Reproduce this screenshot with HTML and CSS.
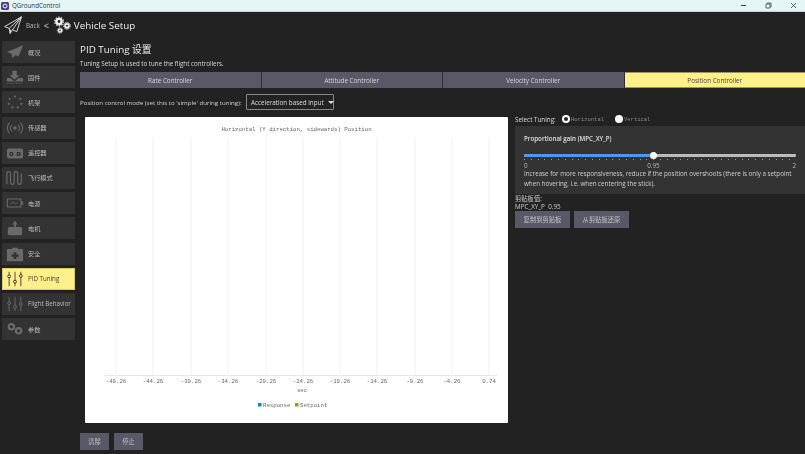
FILE: index.html
```html
<!DOCTYPE html>
<html lang="zh">
<head>
<meta charset="utf-8">
<title>QGroundControl</title>
<link rel="stylesheet" href="styles.css">
</head>
<body>
<div class="app">
  <div class="titlebar">
    <svg class="app-icon" viewBox="0 0 8 8"><rect width="8" height="8" rx="1.5" fill="#4a3a8c"/><circle cx="4" cy="4" r="2" fill="none" stroke="#fff" stroke-width="1"/></svg>
    <span class="app-name">QGroundControl</span>
    <div class="win-controls">
      <svg viewBox="0 0 7 7"><path d="M1 3.5h5" stroke="#444" fill="none"/></svg>
      <svg viewBox="0 0 7 7"><path d="M1 2h4v4H1zM2.2 2V1H6v3.8H5" stroke="#444" stroke-width=".8" fill="none"/></svg>
      <svg viewBox="0 0 7 7"><path d="M1 1l5 5M6 1L1 6" stroke="#444" stroke-width=".8" fill="none"/></svg>
    </div>
  </div>
  <header class="topbar">
    <svg class="plane" viewBox="0 0 18 18"><path d="M17.5.8L.6 10.6l4.6 1.8.9 5 2.4-3.6 4.3 1.9zM5.2 12.4L17.5.8 8.5 13.8M6.1 17.400l.6-3.900" fill="none" stroke="#e8e8e8" stroke-width=".9" stroke-linejoin="round"/></svg>
    <span class="back">Back</span>
    <span class="sep">&lt;</span>
    <svg class="gears" viewBox="0 0 18 18"><g fill="none" stroke="#eee"><circle cx="6" cy="5.500" r="2.600" stroke-width="2.400"/><circle cx="6" cy="5.500" r="4.300" stroke-width="1.200" stroke-dasharray="1.500 1.200"/><circle cx="14" cy="9.800" r="1.900" stroke-width="1.900"/><circle cx="14" cy="9.800" r="3.400" stroke-width="1" stroke-dasharray="1.300 1"/><circle cx="7" cy="14.500" r="1.500" stroke-width="1.500"/><circle cx="7" cy="14.500" r="2.700" stroke-width=".9" stroke-dasharray="1.100 .8"/></g></svg>
    <span class="page-name">Vehicle Setup</span>
  </header>
  <div class="content">
    <nav class="sidebar">
      <div class="nav-item"><svg class="nav-icon" viewBox="0 0 20 16"><path d="M19 .5L1 8l5 2 1.500 5 3-3.500 3.500 1.500z" fill="#6a6a6a"/></svg><span>概况</span></div>
      <div class="nav-item"><svg class="nav-icon" viewBox="0 0 20 16"><path d="M7 1h5v5h3l-5.500 5L4 6h3zM1 9h4l4.500 4L14 9h5v4H1z" fill="#6a6a6a"/><path d="M1 15h18" stroke="#6a6a6a" stroke-dasharray="1 1"/></svg><span>固件</span></div>
      <div class="nav-item"><svg class="nav-icon" viewBox="0 0 20 16"><g fill="#6a6a6a"><circle cx="10" cy="2" r="1.200"/><circle cx="16" cy="4.500" r="1.200"/><circle cx="17" cy="10" r="1.200"/><circle cx="13" cy="14" r="1.200"/><circle cx="7" cy="14" r="1.200"/><circle cx="3" cy="10" r="1.200"/><circle cx="4" cy="4.500" r="1.200"/></g></svg><span>机架</span></div>
      <div class="nav-item"><svg class="nav-icon" viewBox="0 0 20 16"><g fill="none" stroke="#6a6a6a" stroke-width="1.200"><path d="M6.500 4.500a5 5 0 000 7M13.500 4.500a5 5 0 010 7M4 2a8.500 8.500 0 000 12M16 2a8.500 8.500 0 010 12"/></g><circle cx="10" cy="8" r="2" fill="#6a6a6a"/></svg><span>传感器</span></div>
      <div class="nav-item"><svg class="nav-icon" viewBox="0 0 20 16"><path d="M3 3h14a2 2 0 012 2v7a2 2 0 01-2 2H3a2 2 0 01-2-2V5a2 2 0 012-2z" fill="#6a6a6a"/><circle cx="6" cy="9" r="2.500" fill="#333"/><circle cx="14" cy="9" r="2.500" fill="#333"/><circle cx="6" cy="9" r="1" fill="#6a6a6a"/><circle cx="14" cy="9" r="1" fill="#6a6a6a"/></svg><span>遥控器</span></div>
      <div class="nav-item"><svg class="nav-icon" viewBox="0 0 20 16"><path d="M1 15V3a2 2 0 014 0v10a2 2 0 004 0V3a2 2 0 014 0v10a2 2 0 004 0V3" fill="none" stroke="#6a6a6a" stroke-width="1.300"/></svg><span>飞行模式</span></div>
      <div class="nav-item"><svg class="nav-icon" viewBox="0 0 20 16"><path d="M1.500 3.500h15v9h-15z" fill="none" stroke="#6a6a6a" stroke-width="1.200"/><path d="M17 6h2v4h-2z" fill="#6a6a6a"/><path d="M5 8.500l2.500-1.500 3 2 2.500-1.500" fill="none" stroke="#6a6a6a"/></svg><span>电源</span></div>
      <div class="nav-item"><svg class="nav-icon" viewBox="0 0 20 16"><path d="M10 0l3 4h-2v3h5a2 2 0 012 2v5a2 2 0 01-2 2H4a2 2 0 01-2-2V9a2 2 0 012-2h5V4H7z" fill="#6a6a6a"/></svg><span>电机</span></div>
      <div class="nav-item"><svg class="nav-icon" viewBox="0 0 20 16"><path d="M7 2.500V1h6v1.500h5a1 1 0 011 1V15a1 1 0 01-1 1H2a1 1 0 01-1-1V3.500a1 1 0 011-1z" fill="#6a6a6a"/><path d="M8.500 6h3v2.500H14v2.500h-2.500v2.500h-3V11H6V8.500h2.500z" fill="#333"/></svg><span>安全</span></div>
      <div class="nav-item active"><svg class="nav-icon" viewBox="0 0 20 16"><g fill="none" stroke="#3c3c3c" stroke-width="1"><path d="M3.500 0v16M10 0v16M16.500 0v16"/></g><g fill="#fff08a" stroke="#3c3c3c" stroke-width="1.100"><circle cx="3.500" cy="5" r="1.600"/><circle cx="10" cy="11" r="1.600"/><circle cx="16.500" cy="4.500" r="1.600"/></g></svg><span>PID Tuning</span></div>
      <div class="nav-item"><svg class="nav-icon" viewBox="0 0 20 16"><g fill="none" stroke="#6a6a6a" stroke-width="1"><path d="M3.500 0v16M10 0v16M16.500 0v16"/></g><g fill="#333" stroke="#6a6a6a" stroke-width="1.100"><circle cx="3.500" cy="7" r="1.600"/><circle cx="10" cy="11" r="1.600"/><circle cx="16.500" cy="8" r="1.600"/></g></svg><span>Flight Behavior</span></div>
      <div class="nav-item"><svg class="nav-icon" viewBox="0 0 20 16"><g fill="none" stroke="#6a6a6a" stroke-width="2.400"><circle cx="6" cy="5.500" r="3"/><circle cx="14" cy="10" r="3"/></g></svg><span>参数</span></div>
    </nav>
    <main class="main">
      <h1 class="heading">PID Tuning 设置</h1>
      <p class="subtitle">Tuning Setup is used to tune the flight controllers.</p>
      <div class="tabs">
        <div class="tab">Rate Controller</div>
        <div class="tab">Attitude Controller</div>
        <div class="tab">Velocity Controller</div>
        <div class="tab selected">Position Controller</div>
      </div>
      <div class="mode-row">
        <span class="mode-label">Position control mode (set this to 'simple' during tuning):</span>
        <div class="select">Acceleration based input<i class="caret"></i></div>
      </div>
      <div class="workspace">
        <section class="chart">
          <svg viewBox="0 0 423 306" width="423" height="306">
            <text class="chart-text" x="211.500" y="14" text-anchor="middle">Horizontal (Y direction, sidewards) Position</text>
            <g class="grid">
              <path d="M31 20v238M68 20v238M106 20v238M143 20v238M181 20v238M218 20v238M255 20v238M292 20v238M330 20v238M367 20v238M404 20v238"/>
              <path class="axis" d="M20 258.500h392"/>
            </g>
            <g class="chart-text" text-anchor="middle">
              <text x="31" y="266">-49.26</text><text x="68" y="266">-44.26</text><text x="106" y="266">-39.26</text><text x="143" y="266">-34.26</text><text x="181" y="266">-29.26</text><text x="218" y="266">-24.26</text><text x="255" y="266">-19.26</text><text x="292" y="266">-14.26</text><text x="330" y="266">-9.26</text><text x="367" y="266">-4.26</text><text x="404" y="266">0.74</text>
              <text x="217" y="275">sec</text>
            </g>
            <rect x="173" y="286" width="3.500" height="3.500" fill="#1f7fc0"/>
            <text class="chart-text" x="178" y="290">Response</text>
            <rect x="210" y="286" width="3.500" height="3.500" fill="#6fae2c"/>
            <text class="chart-text" x="215" y="290">Setpoint</text>
          </svg>
        </section>
        <aside class="tuning">
          <div class="select-tuning">
            <span class="tuning-label">Select Tuning:</span>
            <i class="radio checked"></i><span class="mono horizontal">Horizontal</span>
            <i class="radio"></i><span class="mono">Vertical</span>
          </div>
          <div class="panel">
            <div class="panel-title">Proportional gain (MPC_XY_P)</div>
            <div class="slider">
              <div class="track"><div class="fill"></div></div>
              <div class="thumb"></div>
              <div class="ticks"></div>
            </div>
            <div class="scale"><span>0</span><span class="mid">0.95</span><span>2</span></div>
            <p class="desc">Increase for more responsiveness, reduce if the position overshoots (there is only a setpoint when hovering, i.e. when centering the stick).</p>
          </div>
          <div class="clipboard">
            <div>剪贴板值:</div>
            <div>MPC_XY_P&nbsp;&nbsp;0.95</div>
          </div>
          <div class="btn-row">
            <div class="btn wide">复制到剪贴板</div>
            <div class="btn wide">从剪贴板还原</div>
          </div>
        </aside>
      </div>
      <div class="btn-row bottom">
        <div class="btn">清除</div>
        <div class="btn">停止</div>
      </div>
    </main>
  </div>
</div>
</body>
</html>
```
FILE: styles.css
```css
* { box-sizing: border-box; }
html, body { margin: 0; padding: 0; }
body {
  width: 805px;
  height: 454px;
  overflow: hidden;
  background: #222;
  font-family: "Open Sans", "Noto Sans CJK SC", sans-serif;
  color: #e0e0e0;
  font-size: 6.3px;
}
.app { width: 805px; height: 454px; display: flex; flex-direction: column; filter: blur(0.35px); }
.titlebar {
  height: 12px;
  flex: none;
  background: #e5f6f6;
  display: flex;
  align-items: center;
  padding-left: 1px;
  color: #333;
  font-size: 6.2px;
  border-bottom: 1px solid #c4d4d4;
}
.app-icon { width: 8px; height: 8px; }
.app-name { margin-left: 3px; }
.win-controls { margin-left: auto; display: flex; gap: 18px; margin-right: 8px; }
.win-controls svg { width: 7px; height: 7px; }
.topbar { height: 29px; flex: none; display: flex; align-items: center; padding: 0 0 3px 4px; }
.plane { width: 18px; height: 18px; }
.back { margin-left: 4px; font-size: 6.2px; color: #bbb; }
.sep { margin-left: 4px; font-size: 9px; }
.gears { width: 18px; height: 18px; margin-left: 4px; }
.page-name { margin-left: 3px; font-size: 9.8px; color: #eee; }
.content { flex: 1; display: flex; min-height: 0; }
.sidebar {
  width: 80px;
  flex: none;
  padding: 0 0 0 2px;
  display: flex;
  flex-direction: column;
  gap: 3.2px;
}
.nav-item {
  width: 73px;
  height: 22px;
  flex: none;
  background: #333;
  display: flex;
  align-items: center;
  padding-left: 4px;
  color: #bdbdbd;
  font-size: 6.2px;
}
.nav-icon { width: 18px; height: 16px; flex: none; margin-right: 4px; }
.nav-item.active { background: #fff08a; color: #3c3c3c; border: 1px solid #d9cc70; padding-left: 3px; }
.main { flex: 1; min-width: 0; display: flex; flex-direction: column; }
.heading { margin: 2px 0 0; height: 13px; line-height: 13px; font-weight: 400; font-size: 9.8px; color: #eee; }
.subtitle { margin: 2.5px 0 0; height: 10px; line-height: 10px; font-size: 6.2px; color: #d8d8d8; }
.tabs { margin-top: 3.5px; height: 16px; flex: none; display: flex; }
.tab {
  flex: 1;
  background: #585866;
  border-right: 1px solid #2e2e34;
  display: flex;
  align-items: center;
  justify-content: center;
  color: #d8d8d8;
  font-size: 6.3px;
}
.tab.selected { background: #fff08a; color: #444; border-right: 0; border-top: 1px solid #9c9460; border-bottom: 1px solid #9c9460; }
.mode-row { margin-top: 6px; height: 16px; flex: none; display: flex; align-items: center; gap: 3px; color: #d0d0d0; font-size: 6.25px; }
.mode-label { width: 163px; flex: none; white-space: nowrap; font-size: 6.15px; }
.select {
  height: 16px;
  width: 88px;
  border: 1px solid #888;
  border-radius: 1px;
  display: flex;
  align-items: center;
  padding-left: 4px;
  color: #ddd;
  font-size: 6.3px;
  white-space: nowrap;
}
.caret { margin-left: 4px; border-left: 3px solid transparent; border-right: 3px solid transparent; border-top: 3px solid #ddd; }
.workspace { margin-top: 7px; display: flex; flex: none; height: 306px; }
.chart { margin-left: 5px; width: 423px; height: 306px; background: #fff; border-radius: 1px; flex: none; }
.chart svg { display: block; }
.chart-text { font-family: "Liberation Mono", monospace; font-size: 5.7px; fill: #666; }
.grid path { stroke: #f1f1f1; stroke-width: 1; fill: none; }
.grid .axis { stroke: #e8e8e8; }
.tuning { margin-left: 7px; flex: 1; min-width: 0; display: flex; flex-direction: column; }
.select-tuning { height: 4px; display: flex; align-items: center; font-size: 6.3px; color: #ddd; white-space: nowrap; }
.tuning-label { width: 47px; flex: none; }
.radio { width: 8px; height: 8px; border-radius: 50%; background: #fff; margin: 0 1px 0 0; flex: none; }
.radio.checked { background: #222; border: 2px solid #fff; }
.mono { font-family: "Liberation Mono", monospace; font-size: 5.5px; color: #8a8a8a; }
.horizontal { margin-right: 11px; }
.panel { margin-top: 5px; height: 68px; background: #333; padding: 8px 9px 0; flex: none; }
.panel-title { height: 10px; line-height: 10px; font-weight: 600; font-size: 6.2px; color: #e0e0e0; }
.slider { position: relative; margin-top: 8px; height: 9px; }
.track { position: absolute; left: 0; right: 0; top: 2px; height: 2.5px; background: #bcbcbc; border-radius: 1px; }
.fill { width: 129px; height: 100%; background: #4a9ae8; border-radius: 1px; }
.thumb { position: absolute; left: 126px; top: 0; width: 7px; height: 7px; border-radius: 50%; background: #fff; }
.ticks {
  position: absolute;
  left: 0;
  right: 0;
  top: 6.5px;
  height: 1px;
  background-image: repeating-linear-gradient(90deg, #999 0, #999 1px, transparent 1px, transparent 6.8px);
}
.scale { display: flex; justify-content: space-between; margin-top: 1px; height: 7px; line-height: 7px; font-size: 6.3px; color: #bbb; }
.mid { margin-right: 13px; }
.desc { margin: 0; font-size: 6.25px; line-height: 9.5px; color: #d0d0d0; }
.clipboard { margin-top: 1px; font-size: 6.3px; line-height: 8px; color: #ccc; }
.btn-row { display: flex; gap: 4px; }
.btn {
  width: 29px;
  height: 17px;
  background: #585866;
  display: flex;
  align-items: center;
  justify-content: center;
  color: #c4c4c8;
  font-size: 6.3px;
}
.btn.wide { width: 55px; }
.bottom { margin-top: 10px; gap: 5px; }
```
